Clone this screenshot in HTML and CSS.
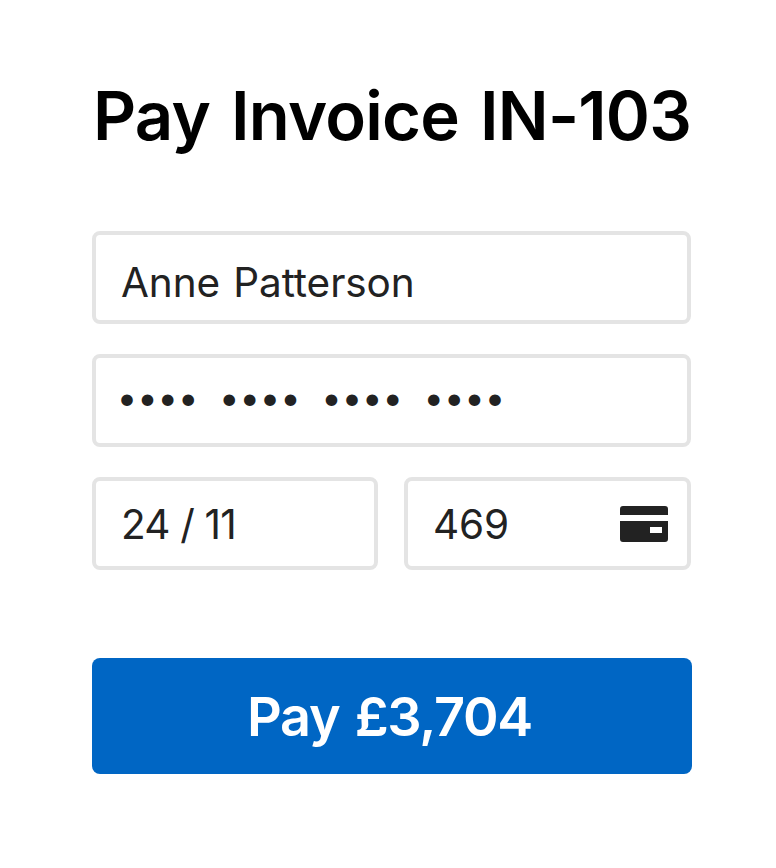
FILE: index.html
```html
<!DOCTYPE html>
<html lang="en">
<head>
    <meta charset="UTF-8">
    <title>Pay Invoice IN-103</title>
    <link rel="stylesheet" href="styles.css">
</head>
<body>
    <div class="container">
        <h1 class="title">Pay Invoice IN-103</h1>

        <div class="fields">
            <div class="field name">Anne Patterson</div>
            <div class="field card-number">•••• •••• •••• ••••</div>
            <div class="row">
                <div class="field expiry">24 / 11</div>
                <div class="field cvc">
                    <span>469</span>
                    <svg class="card-icon" width="48" height="36" viewBox="0 0 48 36">
                        <path fill="#222" fill-rule="evenodd" d="M3 0h42a3 3 0 0 1 3 3v6H0V3a3 3 0 0 1 3-3zM0 15h48v18a3 3 0 0 1-3 3H3a3 3 0 0 1-3-3zM30 21v6h12v-6z"/>
                    </svg>
                </div>
            </div>
        </div>

        <button class="pay-button">Pay £3,704</button>
    </div>
</body>
</html>
```

FILE: styles.css
```css
* {
    box-sizing: border-box;
}

body {
    margin: 0;
    background: #fff;
    color: #222;
    font-family: Inter, sans-serif;
}

.container {
    width: 600px;
    margin-left: 92px;
    padding-top: 76px;
}

.title {
    margin: 0 0 75px;
    padding-left: 1px;
    color: #000;
    font-size: 67px;
    font-weight: 600;
    line-height: 80px;
    letter-spacing: -0.8px;
    word-spacing: 5px;
    white-space: nowrap;
}

.fields {
    display: flex;
    flex-direction: column;
    gap: 30px;
}

.row {
    display: grid;
    grid-template-columns: 286px 287px;
    gap: 26px;
}

.field {
    display: flex;
    align-items: center;
    justify-content: space-between;
    width: 599px;
    height: 93px;
    padding: 9px 19px 0 25px;
    border: 4px solid #e4e4e4;
    border-radius: 8px;
    font-size: 40.5px;
    font-weight: 400;
    letter-spacing: -0.1px;
    word-spacing: 2px;
}

.row .field {
    width: auto;
    padding-top: 1px;
}

.row .expiry {
    letter-spacing: -0.8px;
    word-spacing: 0;
}

.card-number {
    padding: 0 0 8px 22px;
    font-family: Lato, sans-serif;
    font-size: 31px;
    letter-spacing: 2.4px;
    word-spacing: 10.4px;
}

.pay-button {
    width: 600px;
    height: 116px;
    margin-top: 88px;
    padding: 0 5px 0 0;
    border: none;
    border-radius: 8px;
    background: #0066c4;
    color: #fff;
    font-family: Inter, sans-serif;
    font-size: 54px;
    font-weight: 600;
    letter-spacing: -1.3px;
    word-spacing: 3px;
    cursor: pointer;
}
```
